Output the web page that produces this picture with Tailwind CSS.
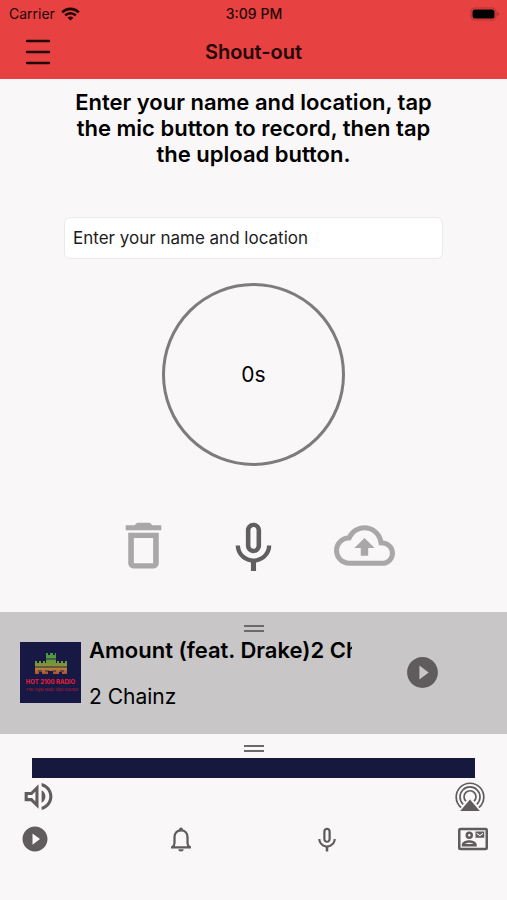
<!DOCTYPE html>
<html lang="en">
<head>
<meta charset="utf-8">
<meta name="viewport" content="width=device-width, initial-scale=1">
<title>Shout-out</title>
<script src="https://cdn.jsdelivr.net/npm/@tailwindcss/browser@4"></script>
</head>
<body class="min-h-screen flex flex-col bg-[#f9f7f8] text-black font-['Inter','Liberation_Sans',sans-serif]">
<header class="bg-[#e84141] text-[#220607] pb-[9px]">
  <div class="grid grid-cols-3 items-center h-[27px] pl-[9px] pr-2 text-sm leading-4">
    <div class="flex items-center gap-1.5">
      <span>Carrier</span>
      <svg class="w-[19px] h-[14px]" viewBox="0 0 19 14" fill="none" stroke="currentColor" stroke-width="2.6" aria-hidden="true"><path d="M1.2 5.3a11.8 11.8 0 0 1 16.6 0M4.2 8.4a7.6 7.6 0 0 1 10.6 0"/><path d="M9.5 13.6 6.6 10.8a4.2 4.2 0 0 1 5.8 0z" fill="currentColor" stroke="none"/></svg>
    </div>
    <span class="text-center font-medium">3:09 PM</span>
    <svg class="justify-self-end w-[30px] h-[14px]" viewBox="0 0 30 14" aria-hidden="true"><rect x="2" y="1" width="25" height="12" rx="4" fill="none" stroke="#b53334" stroke-width="1.2"/><rect x="3.500" y="2.500" width="22" height="9" rx="2.500" fill="#000"/><path d="M28.500 5v4c1.600-.6 1.600-3.400 0-4z" fill="#8f2829"/></svg>
  </div>
  <div class="grid grid-cols-[1fr_auto_1fr] items-center h-[43px] px-[25px] pt-1.5">
    <button type="button" aria-label="Menu" class="w-[26px]">
      <svg class="block w-[26px] h-[26px]" viewBox="0 0 26 26" stroke="currentColor" stroke-width="2.4" stroke-linecap="round"><path d="M2 2h22M2 13h22M2 24h22"/></svg>
    </button>
    <h1 class="text-xl leading-6 font-semibold">Shout-out</h1>
  </div>
</header>

<main class="flex flex-col items-center pt-[10px] px-16">
  <h2 class="max-w-[370px] text-center text-[22px] leading-[26px] font-semibold">Enter your name and location, tap the mic button to record, then tap the upload button.</h2>
  <input type="text" aria-label="Enter your name and location" placeholder="Enter your name and location" class="mt-[50px] w-full h-[42px] rounded-md border border-[#ebe9ea] bg-white px-2 text-[17px] placeholder:text-[#1c1c1c] placeholder:opacity-100">
  <div class="mt-6 size-[183px] rounded-full border-[3px] border-[#7d7c7d] flex items-center justify-center text-[21px] leading-6">0s</div>
  <div class="mt-[49px] w-[282px] flex justify-between">
    <button type="button" aria-label="Delete" class="text-[#a9a7a8]"><svg class="block size-[61px]" viewBox="0 0 24 24" fill="currentColor"><path d="M6 19c0 1.100.9 2 2 2h8c1.100 0 2-.9 2-2V7H6v12zM8.200 9h7.600v10H8.200V9zM15.500 4l-1-1h-5l-1 1H5v2h14V4z"/></svg></button>
    <button type="button" aria-label="Record" class="text-[#605e5f]"><svg class="block size-[61px]" viewBox="0 -1 24 24" fill="currentColor"><path d="M12 14c1.660 0 2.990-1.340 2.990-3L15 5c0-1.660-1.340-3-3-3S9 3.340 9 5v6c0 1.660 1.340 3 3 3zm-1.200-9.100c0-.66.54-1.200 1.200-1.200.66 0 1.200.54 1.200 1.200l-.01 6.200c0 .66-.53 1.200-1.190 1.200-.66 0-1.200-.54-1.200-1.200V4.900zm6.500 6.100c0 3-2.540 5.100-5.300 5.100S6.700 14 6.700 11H5c0 3.410 2.720 6.230 6 6.720V21h2v-3.280c3.280-.48 6-3.300 6-6.720h-1.700z"/></svg></button>
    <button type="button" aria-label="Upload" class="text-[#a9a7a8]"><svg class="block size-[61px]" viewBox="0 0 24 24" fill="currentColor"><path d="M19.350 10.040C18.670 6.590 15.640 4 12 4 9.110 4 6.600 5.640 5.350 8.040 2.340 8.360 0 10.910 0 14c0 3.310 2.690 6 6 6h13c2.760 0 5-2.240 5-5 0-2.640-2.050-4.780-4.650-4.960zM19 18H6c-2.210 0-4-1.790-4-4 0-2.050 1.530-3.760 3.560-3.970l1.070-.11.5-.95C8.080 7.140 9.940 6 12 6c2.620 0 4.880 1.860 5.390 4.430l.3 1.500 1.530.11c1.560.1 2.780 1.410 2.780 2.960 0 1.650-1.350 3-3 3zM8 13h2.550v3h2.900v-3H16l-4-4z"/></svg></button>
  </div>
</main>

<section aria-label="Now playing" class="mt-9 h-[122px] bg-[#c8c6c7] pt-[13px]">
  <div class="mx-auto w-5 h-[7px] border-y-2 border-[#6b696a]"></div>
  <div class="flex items-start pl-5 pr-[66px] pt-[5px]">
    <svg class="mt-[5px] size-[61px] shrink-0" viewBox="0 0 61 61" role="img" aria-label="Hot 2100 Radio">
      <defs><linearGradient id="castle" x1="0" y1="11" x2="0" y2="33" gradientUnits="userSpaceOnUse"><stop offset="0" stop-color="#3f9a45"/><stop offset=".5" stop-color="#79973a"/><stop offset=".7" stop-color="#b38236"/><stop offset="1" stop-color="#a24a32"/></linearGradient></defs>
      <rect width="61" height="61" fill="#171844"/>
      <path fill="url(#castle)" d="M26 11h2v2h2v-2h3v2h2v-2h1v10h1v-2h2v2h2v-2h2v2h2v-2h2v13H15V19h2v2h2v-2h2v2h2v-2h2v2h1z"/>
      <path d="M15 25h32M26 17h10M18 29h4M25 29h4M33 29h3M40 29h4" stroke="#25254a" stroke-width="1" fill="none"/>
      <path d="M19 32v-2h3v2M28 32v-3h5v3M39 32v-2h3v2" fill="#171844"/>
      <text x="30.500" y="42" text-anchor="middle" font-family="Inter, sans-serif" font-size="6" font-weight="700" fill="#ee2038">HOT 2100 RADIO</text>
      <text x="32" y="49" text-anchor="middle" font-family="Inter, sans-serif" font-size="4" fill="#bd1c38">The royal radio vibe sounds</text>
    </svg>
    <div class="ml-2 w-[263px] min-w-0">
      <p class="overflow-hidden whitespace-nowrap text-[22px] leading-[26px] font-semibold">Amount (feat. Drake)2 Chainz</p>
      <p class="mt-[21px] text-[21px] leading-[26px]">2 Chainz</p>
    </div>
    <button type="button" aria-label="Play" class="ml-auto mt-[17px] text-[#605c5d]"><svg class="block size-[37px]" viewBox="0 0 24 24" fill="currentColor"><path d="M12 2C6.480 2 2 6.480 2 12s4.480 10 10 10 10-4.480 10-10S17.520 2 12 2zm-2 14.500v-9l6 4.500-6 4.500z"/></svg></button>
  </div>
</section>

<footer class="pt-[11px] text-[#605c5d]">
  <div class="mx-auto w-5 h-[7px] border-y-2 border-[#6b696a]"></div>
  <div class="mt-[6px] mx-8 h-5 bg-[#17183e]"></div>
  <div class="flex justify-between items-center h-[37px] pl-5 pr-[22px]">
    <button type="button" aria-label="Volume"><svg class="block size-[37px]" viewBox="0 0 24 24" fill="currentColor"><path d="M3 9v6h4l5 5V4L7 9H3zm7-.17v6.340L7.830 13H5v-2h2.830L10 8.830zM16.500 12c0-1.770-1.020-3.290-2.500-4.030v8.050c1.480-.73 2.500-2.250 2.500-4.020zM14 3.230v2.060c2.890.86 5 3.540 5 6.710s-2.110 5.850-5 6.710v2.060c4.010-.91 7-4.490 7-8.770s-2.990-7.860-7-8.770z"/></svg></button>
    <button type="button" aria-label="AirPlay"><svg class="block size-[30px]" viewBox="0 0 30 30" fill="none" stroke="currentColor" stroke-width="1.700"><path d="M6 25.500a13.800 13.800 0 1 1 18 0M8.200 22.300a10 10 0 1 1 13.600 0M11 19.200a6 6 0 1 1 8 0"/><path d="M15 17.500 24.800 29H5.200z" fill="currentColor" stroke="none"/></svg></button>
  </div>
  <nav class="flex justify-between items-center mt-[9px] pl-5 pr-[19px] pb-10">
    <a href="#play" aria-label="Listen"><svg class="block size-[30px]" viewBox="0 0 24 24" fill="currentColor"><path d="M12 2C6.480 2 2 6.480 2 12s4.480 10 10 10 10-4.480 10-10S17.520 2 12 2zm-2 14.500v-9l6 4.500-6 4.500z"/></svg></a>
    <a href="#alerts" aria-label="Notifications"><svg class="block size-[30px]" viewBox="0 0 24 24" fill="none" stroke="currentColor" stroke-width="1.800"><path d="M5.300 18.300c1.100-.9 1.500-1.900 1.500-3.400V10.500c0-3.200 2-5.400 5.200-5.400s5.200 2.200 5.200 5.400v4.400c0 1.500.4 2.500 1.500 3.400M4 18.600h16"/><path d="M12 2.700a1.500 1.500 0 0 1 1.500 1.500v1.200h-3V4.200A1.500 1.500 0 0 1 12 2.700zM9.900 20.200h4.200a2.100 1.800 0 0 1-4.200 0z" fill="currentColor" stroke="none"/></svg></a>
    <a href="#shout-out" aria-label="Shout-out"><svg class="block size-[30px]" viewBox="0 -1 24 24" fill="currentColor"><path d="M12 14c1.660 0 2.990-1.340 2.990-3L15 5c0-1.660-1.340-3-3-3S9 3.340 9 5v6c0 1.660 1.340 3 3 3zm-1.200-9.100c0-.66.54-1.200 1.200-1.200.66 0 1.200.54 1.200 1.200l-.01 6.200c0 .66-.53 1.200-1.190 1.200-.66 0-1.200-.54-1.200-1.200V4.900zm6.500 6.100c0 3-2.540 5.100-5.300 5.100S6.700 14 6.700 11H5c0 3.410 2.720 6.230 6 6.720V21h2v-3.280c3.280-.48 6-3.300 6-6.720h-1.700z"/></svg></a>
    <a href="#contact" aria-label="Contact"><svg class="block size-[30px]" viewBox="0 0 24 24" fill="currentColor"><path fill-rule="evenodd" d="M2 3h20a2 2 0 0 1 2 2v14a2 2 0 0 1-2 2H2a2 2 0 0 1-2-2V5a2 2 0 0 1 2-2zm0 2v14h20V5z"/><path fill-rule="evenodd" d="M21 6h-7v5h7zm-1 2-2.500 1.750L15 8V7l2.500 1.750L20 7z"/><path fill-rule="evenodd" d="M9 12a3 3 0 1 0 0-6 3 3 0 0 0 0 6zm0-4a1 1 0 1 1 0 2 1 1 0 0 1 0-2zM15 16.590C15 14.090 11.030 13 9 13s-6 1.090-6 3.580V18h12zM5.480 16c.74-.5 2.220-1 3.520-1s2.770.49 3.520 1z"/></svg></a>
  </nav>
</footer>
</body>
</html>
